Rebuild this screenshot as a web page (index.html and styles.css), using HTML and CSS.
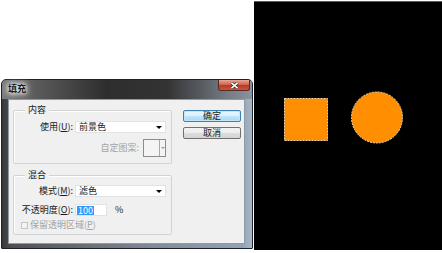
FILE: index.html
```html
<!DOCTYPE html>
<html>
<head>
<meta charset="utf-8">
<link rel="stylesheet" href="styles.css">
</head>
<body>
<div class="stage">
  <div class="dialog">
    <div class="titlebar">
      <span class="title">填充</span>
      <span class="close"><svg width="9" height="7" viewBox="0 0 9 7"><path d="M1.5 0.8 L7.5 6.2 M7.5 0.8 L1.5 6.2" stroke="#3a2a2a" stroke-width="3"/><path d="M1.5 0.8 L7.5 6.2 M7.5 0.8 L1.5 6.2" stroke="#ffffff" stroke-width="1.6"/></svg></span>
    </div>
    <div class="client">
      <div class="groups">
        <div class="group g1">
          <div class="gtitle">内容</div>
          <div class="row r1">
            <span class="lbl">使用(<u>U</u>):</span>
            <div class="select"><span class="val">前景色</span><i class="arrow"></i></div>
          </div>
          <div class="row r2">
            <span class="lbl-dis">自定图案:</span>
            <div class="pattern"><span class="pbox"></span><span class="pdrop"><i class="parrow"></i></span></div>
          </div>
        </div>
        <div class="group g2">
          <div class="gtitle">混合</div>
          <div class="row r3">
            <span class="lbl">模式(<u>M</u>):</span>
            <div class="select"><span class="val">滤色</span><i class="arrow"></i></div>
          </div>
          <div class="row r4">
            <span class="lbl">不透明度(<u>O</u>):</span>
            <div class="input"><span class="sel">100</span></div>
            <span class="pct">%</span>
          </div>
          <div class="row r5">
            <span class="check"></span>
            <span class="chk-lbl">保留透明区域(<u>P</u>)</span>
          </div>
        </div>
      </div>
      <div class="buttons">
        <div class="btn btn-default">确定</div>
        <div class="btn">取消</div>
      </div>
    </div>
  </div>
  <div class="canvas">
    <svg width="188" height="249" viewBox="0 0 188 249">
      <rect x="30.5" y="96.5" width="43" height="42" fill="#ff8f00" stroke="#f7dcb0" stroke-width="1" stroke-dasharray="2 1"/>
      <circle cx="123" cy="115.5" r="25.5" fill="#ff8f00" stroke="#f7dcb0" stroke-width="1" stroke-dasharray="2 1"/>
    </svg>
  </div>
</div>
</body>
</html>
```

FILE: styles.css
```css
* { box-sizing: border-box; }
html, body { margin: 0; padding: 0; }
body {
  width: 442px;
  height: 253px;
  background: #ffffff;
  overflow: hidden;
  font-family: "Noto Sans CJK SC", "Noto Sans", sans-serif;
  font-size: 9px;
  color: #1a1a1a;
}
.stage {
  display: flex;
  align-items: flex-start;
}
.dialog {
  margin: 79px 0 0 1px;
  width: 252px;
  height: 170px;
  border: 1px solid #1e2228;
  border-radius: 5px 5px 1px 1px;
  background: linear-gradient(to right, #3a3a3a 0, #505050 4%, #7f8a96 60%, #93a3b5 96%, #a9b7c6 100%);
  display: flex;
  flex-direction: column;
}
.titlebar {
  height: 19px;
  display: flex;
  align-items: flex-start;
  background: linear-gradient(to right, #7c7c7c 0, #5a5a5a 14%, #2e2e2e 42%, #333333 66%, #78818b 92%, #8b949e 100%);
  border-radius: 4px 4px 0 0;
}
.title {
  margin: 3px 0 0 6px;
  line-height: 12px;
  font-size: 9px;
  font-weight: bold;
  color: #1a1a1a;
  text-shadow: 0 0 4px #ffffff, 0 0 6px #ffffff, 0 0 8px rgba(255,255,255,0.8);
}
.close {
  margin-left: auto;
  margin-right: 2px;
  width: 32px;
  height: 11px;
  border: 1px solid #5a2a22;
  border-top: none;
  border-radius: 0 0 3px 3px;
  background: linear-gradient(to bottom, #e8a896 0, #d2654f 45%, #bd3a24 55%, #c9563c 100%);
  display: flex;
  align-items: center;
  justify-content: center;
}
.close svg { display: block; }
.client {
  margin: 0 7px 0 6px;
  height: 145px;
  background: #f0f0f0;
  border: 1px solid #8f9aa8;
  display: flex;
  padding: 0 0 0 4px;
}
.groups {
  width: 159px;
  display: flex;
  flex-direction: column;
}
.group {
  border: 1px solid #cfd4d9;
  border-radius: 2px;
  box-shadow: inset 1px 1px 0 #ffffff;
  display: flex;
  flex-direction: column;
}
.g1 { margin-top: 10px; height: 54px; }
.g2 { margin-top: 11px; height: 60px; }
.gtitle {
  margin: -7px 0 0 11px;
  padding: 0 3px;
  line-height: 12px;
  height: 12px;
  background: #f0f0f0;
  align-self: flex-start;
  color: #1a1a1a;
}
.row {
  display: flex;
  align-items: center;
  height: 12px;
}
.lbl {
  width: 59px;
  text-align: right;
  margin-right: 2px;
  white-space: nowrap;
  line-height: 12px;
}
.lbl u, .chk-lbl u { text-decoration: underline; }
.r1 { margin-top: 5px; }
.r2 { margin-top: 6px; height: 18px; justify-content: flex-end; padding-right: 5px; }
.r3 { margin-top: 4px; }
.r4 { margin-top: 7px; }
.r5 { margin-top: 3px; }
.select {
  width: 91px;
  height: 12px;
  background: #ffffff;
  border: 1px solid #e2e2e2;
  display: flex;
  align-items: center;
  padding-left: 3px;
}
.val { line-height: 10px; }
.arrow {
  margin-left: auto;
  margin-right: 3px;
  width: 0;
  height: 0;
  border-left: 3px solid transparent;
  border-right: 3px solid transparent;
  border-top: 3px solid #000000;
}
.lbl-dis {
  color: #a3a3a3;
  margin-right: 4px;
  line-height: 12px;
}
.pattern {
  width: 23px;
  height: 18px;
  border: 1px solid #8c8c8c;
  display: flex;
  background: #f4f4f4;
}
.pbox { flex: 1; }
.pdrop {
  width: 6px;
  border-left: 1px solid #a8a8a8;
  display: flex;
  align-items: center;
  justify-content: center;
}
.parrow {
  width: 0;
  height: 0;
  border-left: 2px solid transparent;
  border-right: 2px solid transparent;
  border-top: 2px solid #9a9a9a;
}
.input {
  width: 32px;
  height: 12px;
  background: #ffffff;
  border: 1px solid #e2e2e2;
  display: flex;
  align-items: center;
  padding-left: 1px;
}
.sel {
  background: #3399ff;
  color: #ffffff;
  line-height: 9px;
  padding: 0 1px;
}
.pct { margin-left: 8px; line-height: 12px; }
.check {
  margin-left: 7px;
  width: 7px;
  height: 7px;
  border: 1px solid #c4c4c4;
  background: #f4f4f4;
}
.chk-lbl {
  margin-left: 2px;
  color: #a3a3a3;
  line-height: 12px;
}
.buttons {
  margin: 10px 0 0 11px;
  width: 58px;
  display: flex;
  flex-direction: column;
  gap: 5px;
}
.btn {
  height: 12px;
  border: 1px solid #707070;
  border-radius: 2px;
  background: linear-gradient(to bottom, #f4f4f4 0, #ececec 50%, #dddddd 51%, #d4d4d4 100%);
  text-align: center;
  line-height: 10px;
  font-size: 9px;
  color: #1a1a1a;
}
.btn-default {
  border-color: #3c7fb1;
  background: linear-gradient(to bottom, #eaf6fd 0, #d9f0fc 50%, #bee6fd 51%, #a7d9f5 100%);
  box-shadow: inset 0 0 0 1px #c6e6f8;
}
.canvas {
  margin: 1px 0 0 1px;
  width: 188px;
  height: 249px;
  background: #000000;
  border-top: 1px solid #5c5c5c;
}
.canvas svg { display: block; }
```
